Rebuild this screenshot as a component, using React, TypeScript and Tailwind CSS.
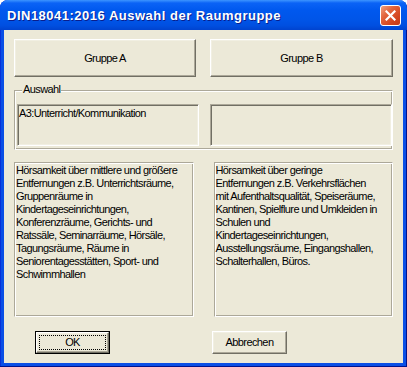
import React from 'react';

const leftText = [
  'Hörsamkeit über mittlere und größere',
  'Entfernungen z.B. Unterrichtsräume,',
  'Gruppenräume in',
  'Kindertageseinrichtungen,',
  'Konferenzräume, Gerichts- und',
  'Ratssäle, Seminarräume, Hörsäle,',
  'Tagungsräume, Räume in',
  'Seniorentagesstätten, Sport- und',
  'Schwimmhallen',
];

const rightText = [
  'Hörsamkeit über geringe',
  'Entfernungen z.B. Verkehrsflächen',
  'mit Aufenthaltsqualität, Speiseräume,',
  'Kantinen, Spielflure und Umkleiden in',
  'Schulen und',
  'Kindertageseinrichtungen,',
  'Ausstellungsräume, Eingangshallen,',
  'Schalterhallen, Büros.',
];

// classic raised 3D edge
const raised =
  'border border-t-white border-l-white border-r-[#716f64] border-b-[#716f64] shadow-[inset_-1px_-1px_0_#aca899,inset_1px_1px_0_#f1efe2]';
// sunken edge
const sunken =
  'border border-t-[#aca899] border-l-[#aca899] border-r-white border-b-white shadow-[inset_1px_1px_0_#716f64,inset_-1px_-1px_0_#f1efe2]';
// etched line (group box, static frames)
const etched =
  'border border-t-[#aca899] border-l-[#aca899] border-r-white border-b-white shadow-[inset_1px_1px_0_#ffffff,inset_-1px_-1px_0_#aca899]';

const TextFrame = ({ lines }: { lines: string[] }) => (
  <div className={`w-[180px] h-[155px] ${etched} pl-[1px] pt-[1px]`}>
    {lines.map((l, i) => (
      <div key={i} className="whitespace-nowrap leading-[13px]">
        {l}
      </div>
    ))}
  </div>
);

export default function App() {
  return (
    <div
      className="w-[407px] h-[367px] flex flex-col rounded-t-[8px] bg-[#0a4fe6] shadow-[inset_-1px_-1px_0_#00138c,inset_1px_0_0_#0831d9] text-[11px] text-black tracking-[-0.6px]"
      style={{ fontFamily: '"Liberation Sans", Arial, sans-serif' }}
    >
      {/* title bar */}
      <div className="h-[30px] flex items-center justify-between pl-[7px] pr-[6px] rounded-t-[8px] bg-[linear-gradient(to_bottom,#3d95ff_0%,#0b63f6_10%,#0058ee_35%,#0055e8_65%,#004fe0_85%,#0043cf_100%)]">
        <span className="text-white font-bold text-[13px] tracking-[0.5px] [text-shadow:1px_1px_0_#0a1e8c] pt-[1px]">
          DIN18041:2016 Auswahl der Raumgruppe
        </span>
        <div className="w-[21px] h-[21px] rounded-[3px] border border-white bg-[linear-gradient(135deg,#f0a080_0%,#e2643c_35%,#d4461f_70%,#c63a16_100%)] flex items-center justify-center">
          <svg width="11" height="11" viewBox="0 0 11 11">
            <path d="M1.5 1.5 L9.5 9.5 M9.5 1.5 L1.5 9.5" stroke="white" strokeWidth="2.2" strokeLinecap="square" />
          </svg>
        </div>
      </div>

      {/* body */}
      <div className="flex-1 mx-[4px] mb-[4px] bg-[#ece9d8] pl-[10px] pr-[10px] pt-[9px] flex flex-col">
        <div className="flex gap-[14px]">
          <button className={`w-[182px] h-[38px] ${raised} bg-[#ece9d8] flex items-center justify-center`}>
            Gruppe A
          </button>
          <button className={`w-[183px] h-[38px] ${raised} bg-[#ece9d8] flex items-center justify-center`}>
            Gruppe B
          </button>
        </div>

        {/* group box */}
        <div className={`relative mt-[13px] w-[379px] h-[60px] ${etched} pt-[13px] pl-[2px] flex gap-[11px]`}>
          <span className="absolute left-[7px] top-[-8px] bg-[#ece9d8] px-[1px] leading-[13px]">Auswahl</span>
          <div className={`w-[182px] h-[42px] ${sunken} pl-[1px] pt-[2px] leading-[13px]`}>
            A3:Unterricht/Kommunikation
          </div>
          <div className={`w-[182px] h-[42px] ${sunken}`} />
        </div>

        <div className="mt-[12px] flex gap-[20px]">
          <TextFrame lines={leftText} />
          <TextFrame lines={rightText} />
        </div>

        <div className="mt-[14px] pl-[21px] flex gap-[102px]">
          <button className="w-[75px] h-[23px] border border-black bg-[#ece9d8] p-[0px]">
            <div className={`w-full h-full ${raised} p-[2px]`}>
              <div className="w-full h-full border border-dotted border-black flex items-center justify-center">
                OK
              </div>
            </div>
          </button>
          <button className={`w-[75px] h-[23px] ${raised} bg-[#ece9d8] flex items-center justify-center`}>
            Abbrechen
          </button>
        </div>
      </div>
    </div>
  );
}
